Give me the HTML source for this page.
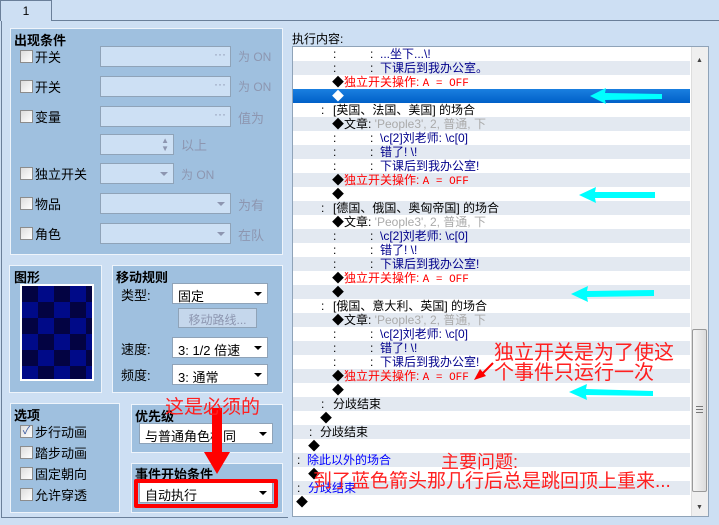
<!DOCTYPE html>
<html><head><meta charset="utf-8"><style>
*{margin:0;padding:0;box-sizing:border-box}
body{width:719px;height:525px;background:#cddff3;font-family:"Liberation Sans","Noto Sans CJK SC",sans-serif;font-size:12px;position:relative;overflow:hidden;color:#000}
.a{position:absolute}
.pn{position:absolute;background:#9fc0df;border:1px solid #eef4fb}
.t{position:absolute;font-weight:bold;font-size:13px}
.cb{position:absolute;width:13px;height:13px;border:1px solid #8c8c8c;background:linear-gradient(135deg,#ddd,#fff)}
.in{position:absolute;background:#cde0f4;border:1px solid #8fa3b8;height:21px}
.wh{position:absolute;background:#fff;border:1px solid #8fa3b8;height:21px;font-size:13px;padding:2px 0 0 5px}
.gr{color:#8d96b0;position:absolute;font-size:12px}
.dd{position:absolute;right:5px;top:8px;width:0;height:0;border-left:4px solid transparent;border-right:4px solid transparent;border-top:4px solid #000}
.ddg{border-top-color:#8d96b0}
.row{position:absolute;left:293px;width:397px;height:14px;font-size:12px;line-height:14px;white-space:pre}
.row span{position:absolute;top:0}
.row span span{position:static}
.g{background:#e3e9f1}
.r{color:#f00}.b{color:#00008b}.bl{color:#0000ff}.gy{color:#aaa}
.m{font-family:"Liberation Mono",monospace;font-size:11px}
.c1{left:40px}.c2{left:77px}.tx{left:87px}.d{left:39px}.dt{left:51px}.hc{left:28px}.ht{left:40px}
.ann{position:absolute;color:#ff2020;font-size:20px;white-space:nowrap;font-family:"Liberation Sans","Noto Sans CJK SC",sans-serif}
</style></head><body>
<div class="a" style="left:0;top:20px;width:719px;height:1px;background:#6a7f99"></div>
<div class="a" style="left:0;top:0;width:52px;height:21px;background:#cddff3;border:1px solid #6a7f99;border-bottom:none;text-align:center;padding-top:3px">1</div>
<div class="a" style="left:1px;top:21px;width:1px;height:497px;background:#6a7f99"></div>
<div class="a" style="left:1px;top:517px;width:287px;height:1px;background:#6a7f99"></div>

<div class="pn" style="left:10px;top:28px;width:273px;height:227px"></div>
<div class="t" style="left:14px;top:30px">出现条件</div>
<div class="cb" style="left:20px;top:50px"></div><div class="a" style="left:35px;top:47px;font-size:13px">开关</div>
<div class="in" style="left:100px;top:46px;width:131px"><span class="a" style="right:4px;top:0;color:#8d96b0">···</span></div><div class="gr" style="left:238px;top:48px">为 ON</div>
<div class="cb" style="left:20px;top:80px"></div><div class="a" style="left:35px;top:77px;font-size:13px">开关</div>
<div class="in" style="left:100px;top:76px;width:131px"><span class="a" style="right:4px;top:0;color:#8d96b0">···</span></div><div class="gr" style="left:238px;top:78px">为 ON</div>
<div class="cb" style="left:20px;top:110px"></div><div class="a" style="left:35px;top:107px;font-size:13px">变量</div>
<div class="in" style="left:100px;top:106px;width:131px"><span class="a" style="right:4px;top:0;color:#8d96b0">···</span></div><div class="gr" style="left:238px;top:108px;font-size:13px">值为</div>
<div class="in" style="left:100px;top:134px;width:74px"><span class="a" style="right:4px;top:2px;color:#8d96b0;font-size:8px;line-height:8px">▲<br>▼</span></div><div class="gr" style="left:181px;top:135px;font-size:13px">以上</div>
<div class="cb" style="left:20px;top:167px"></div><div class="a" style="left:35px;top:164px;font-size:13px">独立开关</div>
<div class="in" style="left:100px;top:163px;width:74px"><span class="dd ddg"></span></div><div class="gr" style="left:181px;top:166px">为 ON</div>
<div class="cb" style="left:20px;top:197px"></div><div class="a" style="left:35px;top:194px;font-size:13px">物品</div>
<div class="in" style="left:100px;top:193px;width:131px"><span class="dd ddg"></span></div><div class="gr" style="left:238px;top:195px;font-size:13px">为有</div>
<div class="cb" style="left:20px;top:227px"></div><div class="a" style="left:35px;top:224px;font-size:13px">角色</div>
<div class="in" style="left:100px;top:223px;width:131px"><span class="dd ddg"></span></div><div class="gr" style="left:238px;top:225px;font-size:13px">在队</div>

<div class="pn" style="left:9px;top:265px;width:93px;height:128px"></div>
<div class="t" style="left:14px;top:267px">图形</div>
<div class="a" style="left:20px;top:284px;width:74px;height:97px;border:2px solid #fff;background-color:#030342;background-image:linear-gradient(45deg,#000a88 25%,transparent 25%,transparent 75%,#000a88 75%),linear-gradient(45deg,#000a88 25%,transparent 25%,transparent 75%,#000a88 75%);background-size:32px 32px;background-position:0 0,16px 16px"></div>

<div class="pn" style="left:112px;top:265px;width:171px;height:128px"></div>
<div class="t" style="left:116px;top:267px">移动规则</div>
<div class="a" style="left:121px;top:285px;font-size:13px">类型:</div>
<div class="wh" style="left:172px;top:283px;width:96px">固定<span class="dd"></span></div>
<div class="a" style="left:178px;top:308px;width:79px;height:20px;border:1px solid #8fa3b8;background:#c5d7ec;color:#8d96b0;font-size:12px;text-align:center;padding-top:2px">移动路线...</div>
<div class="a" style="left:121px;top:339px;font-size:13px">速度:</div>
<div class="wh" style="left:172px;top:337px;width:96px">3: 1/2 倍速<span class="dd"></span></div>
<div class="a" style="left:121px;top:365px;font-size:13px">频度:</div>
<div class="wh" style="left:172px;top:364px;width:96px">3: 通常<span class="dd"></span></div>

<div class="pn" style="left:10px;top:403px;width:110px;height:110px"></div>
<div class="t" style="left:14px;top:405px">选项</div>
<div class="cb" style="left:20px;top:425px;color:#3a5aa0;font-size:11px;line-height:11px;text-align:center">✓</div><div class="a" style="left:35px;top:422px;font-size:13px">步行动画</div>
<div class="cb" style="left:20px;top:446px"></div><div class="a" style="left:35px;top:443px;font-size:13px">踏步动画</div>
<div class="cb" style="left:20px;top:467px"></div><div class="a" style="left:35px;top:464px;font-size:13px">固定朝向</div>
<div class="cb" style="left:20px;top:488px"></div><div class="a" style="left:35px;top:485px;font-size:13px">允许穿透</div>

<div class="pn" style="left:131px;top:404px;width:152px;height:49px"></div>
<div class="t" style="left:135px;top:406px">优先级</div>
<div class="wh" style="left:139px;top:423px;width:134px">与普通角色相同<span class="dd"></span></div>
<div class="pn" style="left:131px;top:463px;width:152px;height:50px"></div>
<div class="t" style="left:135px;top:464px">事件开始条件</div>
<div class="wh" style="left:139px;top:482px;width:134px">自动执行<span class="dd"></span></div>
<div class="a" style="left:134px;top:479px;width:144px;height:29px;border:4px solid #f00;border-radius:2px"></div>
<div class="a" style="left:212px;top:408px;width:10px;height:46px;background:#f00"></div>
<div class="a" style="left:204px;top:452px;width:0;height:0;border-left:13px solid transparent;border-right:13px solid transparent;border-top:22px solid #f00"></div>
<div class="ann" style="left:165px;top:392px;font-size:19px">这是必须的</div>

<div class="a" style="left:292px;top:30px;font-size:12px">执行内容:</div>
<div class="a" style="left:292px;top:46px;width:417px;height:471px;background:#fff;border:1px solid #8fa3b8"></div>
<div class="a" style="left:691px;top:47px;width:17px;height:469px;background:#efefef;border-left:1px solid #ddd"></div>
<div class="a" style="left:696px;top:57px;font-size:7px;color:#444">▲</div>
<div class="a" style="left:696px;top:504px;font-size:7px;color:#444">▼</div>
<div class="a" style="left:692px;top:329px;width:15px;height:163px;background:linear-gradient(90deg,#f5f5f5,#dcdcdc);border:1px solid #999;border-radius:2px"></div>
<div class="a" style="left:696px;top:406px;width:7px;height:7px;border-top:1px solid #777;border-bottom:1px solid #777"><div style="margin-top:2px;height:1px;background:#777"></div></div>

<div class="row" style="top:47px"><span class="c1">:</span><span class="c2">:</span><span class="tx b">...坐下...\!</span></div>
<div class="row g" style="top:61px"><span class="c1">:</span><span class="c2">:</span><span class="tx b">下课后到我办公室。</span></div>
<div class="row" style="top:75px"><span class="d">◆</span><span class="dt r">独立开关操作: <span class="m">A = OFF</span></span></div>
<div class="row" style="top:89px;background:linear-gradient(#1a7fe0,#0060c8);color:#fff"><span class="d">◆</span></div>
<div class="row" style="top:103px"><span class="hc">:</span><span class="ht">[英国、法国、美国] 的场合</span></div>
<div class="row g" style="top:117px"><span class="d">◆</span><span class="dt">文章: <span class="gy">'People3', 2, 普通, 下</span></span></div>
<div class="row" style="top:131px"><span class="c1">:</span><span class="c2">:</span><span class="tx b">\c[2]刘老师: \c[0]</span></div>
<div class="row g" style="top:145px"><span class="c1">:</span><span class="c2">:</span><span class="tx b">错了! \!</span></div>
<div class="row" style="top:159px"><span class="c1">:</span><span class="c2">:</span><span class="tx b">下课后到我办公室!</span></div>
<div class="row g" style="top:173px"><span class="d">◆</span><span class="dt r">独立开关操作: <span class="m">A = OFF</span></span></div>
<div class="row" style="top:187px"><span class="d">◆</span></div>
<div class="row g" style="top:201px"><span class="hc">:</span><span class="ht">[德国、俄国、奥匈帝国] 的场合</span></div>
<div class="row" style="top:215px"><span class="d">◆</span><span class="dt">文章: <span class="gy">'People3', 2, 普通, 下</span></span></div>
<div class="row g" style="top:229px"><span class="c1">:</span><span class="c2">:</span><span class="tx b">\c[2]刘老师: \c[0]</span></div>
<div class="row" style="top:243px"><span class="c1">:</span><span class="c2">:</span><span class="tx b">错了! \!</span></div>
<div class="row g" style="top:257px"><span class="c1">:</span><span class="c2">:</span><span class="tx b">下课后到我办公室!</span></div>
<div class="row" style="top:271px"><span class="d">◆</span><span class="dt r">独立开关操作: <span class="m">A = OFF</span></span></div>
<div class="row g" style="top:285px"><span class="d">◆</span></div>
<div class="row" style="top:299px"><span class="hc">:</span><span class="ht">[俄国、意大利、英国] 的场合</span></div>
<div class="row g" style="top:313px"><span class="d">◆</span><span class="dt">文章: <span class="gy">'People3', 2, 普通, 下</span></span></div>
<div class="row" style="top:327px"><span class="c1">:</span><span class="c2">:</span><span class="tx b">\c[2]刘老师: \c[0]</span></div>
<div class="row g" style="top:341px"><span class="c1">:</span><span class="c2">:</span><span class="tx b">错了! \!</span></div>
<div class="row" style="top:355px"><span class="c1">:</span><span class="c2">:</span><span class="tx b">下课后到我办公室!</span></div>
<div class="row g" style="top:369px"><span class="d">◆</span><span class="dt r">独立开关操作: <span class="m">A = OFF</span></span></div>
<div class="row" style="top:383px"><span class="d">◆</span></div>
<div class="row g" style="top:397px"><span class="hc">:</span><span class="ht">分歧结束</span></div>
<div class="row" style="top:411px"><span style="left:27px">◆</span></div>
<div class="row g" style="top:425px"><span style="left:16px">:</span><span style="left:27px">分歧结束</span></div>
<div class="row" style="top:439px"><span style="left:15px">◆</span></div>
<div class="row g" style="top:453px"><span style="left:4px">:</span><span style="left:14px" class="bl">除此以外的场合</span></div>
<div class="row" style="top:467px"><span style="left:15px">◆</span></div>
<div class="row g" style="top:481px"><span style="left:4px">:</span><span style="left:15px" class="bl">分歧结束</span></div>
<div class="row" style="top:495px"><span style="left:3px">◆</span></div>

<svg class="a" style="left:0;top:0" width="719" height="525">
<g fill="#00ffff" stroke="none">
<path d="M590 96 L606 88 L605 93 L662 94 L662 99 L605 100 L606 104 Z"/>
<path d="M579 195 L596 187 L595 192 L655 192 L655 198 L595 198 L596 203 Z"/>
<path d="M571 294 L588 286 L587 291 L654 290 L654 296 L587 297 L588 302 Z"/>
<path d="M569 392 L587 384 L586 389 L653 391 L653 396 L586 395 L587 400 Z"/>
</g>
<path d="M493 363 L480 376" stroke="#f00" stroke-width="2"/>
<path d="M474 380 L480 369 L486 376 Z" fill="#f00"/>
</svg>
<div class="ann" style="left:494px;top:336px">独立开关是为了使这</div>
<div class="ann" style="left:494px;top:356px">个事件只运行一次</div>
<div class="ann" style="left:441px;top:448px;font-size:18px">主要问题:</div>
<div class="ann" style="left:313px;top:466px;font-size:19px">到了蓝色箭头那几行后总是跳回顶上重来...</div>
</body></html>
